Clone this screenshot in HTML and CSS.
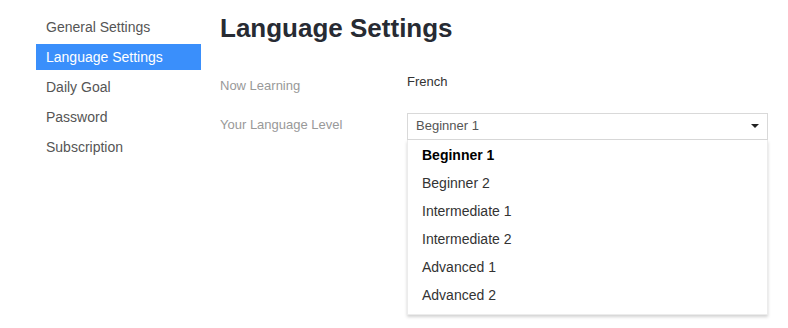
FILE: index.html
```html
<!DOCTYPE html>
<html lang="en">

<head>
    <meta charset="utf-8">
    <title>Language Settings</title>
    <meta name="viewport" content="width=device-width, initial-scale=1.0">
    <link rel="stylesheet" href="styles.css">
</head>

<body>
    <div class="page">
        <!-- Menu des réglages -->
        <nav class="side-menu">
            <a href="#">General Settings</a>
            <a href="#" class="active">Language Settings</a>
            <a href="#">Daily Goal</a>
            <a href="#">Password</a>
            <a href="#">Subscription</a>
        </nav>

        <!-- Contenu -->
        <main class="content">
            <h1>Language Settings</h1>

            <div class="form-grid">
                <div class="label label-first">Now Learning</div>
                <div class="value">French</div>

                <div class="label label-second">Your Language Level</div>
                <div class="select-wrap">
                    <div class="select-box">
                        <span>Beginner 1</span>
                        <span class="arrow"></span>
                    </div>
                    <ul class="options">
                        <li class="selected">Beginner 1</li>
                        <li>Beginner 2</li>
                        <li>Intermediate 1</li>
                        <li>Intermediate 2</li>
                        <li>Advanced 1</li>
                        <li>Advanced 2</li>
                    </ul>
                </div>
            </div>
        </main>
    </div>
</body>

</html>
```

FILE: styles.css
```css
/* Normalisation
============================================================*/

* {
    margin: 0;
    padding: 0;
    box-sizing: border-box;
}

html {
    font-family: "Liberation Sans", Arial, Helvetica, sans-serif;
    font-size: 14px;
}

body {
    min-height: 100vh;
    background-color: #fff;
    color: #333;
}

.page {
    display: flex;
    gap: 19px;
    padding-left: 36px;
    padding-right: 20px;
}

/* Menu de gauche
============================================================*/

.side-menu {
    width: 165px;
    flex-shrink: 0;
    padding-top: 14px;
    display: flex;
    flex-direction: column;
    gap: 4px;
}

.side-menu a {
    display: block;
    padding: 4px 10px;
    line-height: 18px;
    font-size: 14px;
    color: #555;
    text-decoration: none;
}

.side-menu a.active {
    background-color: #3a8ffb;
    color: #fff;
}

/* Contenu
============================================================*/

.content {
    flex-grow: 1;
}

h1 {
    margin-top: 13px;
    font-size: 26px;
    line-height: 30px;
    font-weight: bold;
    color: #272b33;
}

.form-grid {
    margin-top: 30px;
    display: grid;
    grid-template-columns: 187px 1fr;
    row-gap: 18px;
    align-items: start;
}

.label {
    font-size: 13px;
    line-height: 18px;
    color: #999;
}

.label-first {
    padding-top: 4px;
}

.label-second {
    padding-top: 3px;
}

.value {
    font-size: 13px;
    line-height: 18px;
    color: #333;
}

/* Liste déroulante (ouverte)
============================================================*/

.select-wrap {
    display: flex;
    flex-direction: column;
}

.select-box {
    height: 27px;
    padding: 3px 8px 4px 8px;
    border: 1px solid #d9d9d9;
    font-size: 13px;
    line-height: 18px;
    color: #555;
    display: flex;
    justify-content: space-between;
    align-items: center;
}

.arrow {
    width: 0;
    height: 0;
    border-left: 4px solid transparent;
    border-right: 4px solid transparent;
    border-top: 4px solid #222;
}

.options {
    list-style: none;
    padding: 1px 0 5px;
    background-color: #fff;
    border: 1px solid #ececec;
    border-top: none;
    box-shadow: 0 2px 3px rgba(0, 0, 0, 0.18);
}

.options li {
    display: block;
    height: 28px;
    padding: 0 14px;
    line-height: 28px;
    font-size: 14px;
    color: #333;
}

.options li.selected {
    font-weight: bold;
    color: #000;
}
```
